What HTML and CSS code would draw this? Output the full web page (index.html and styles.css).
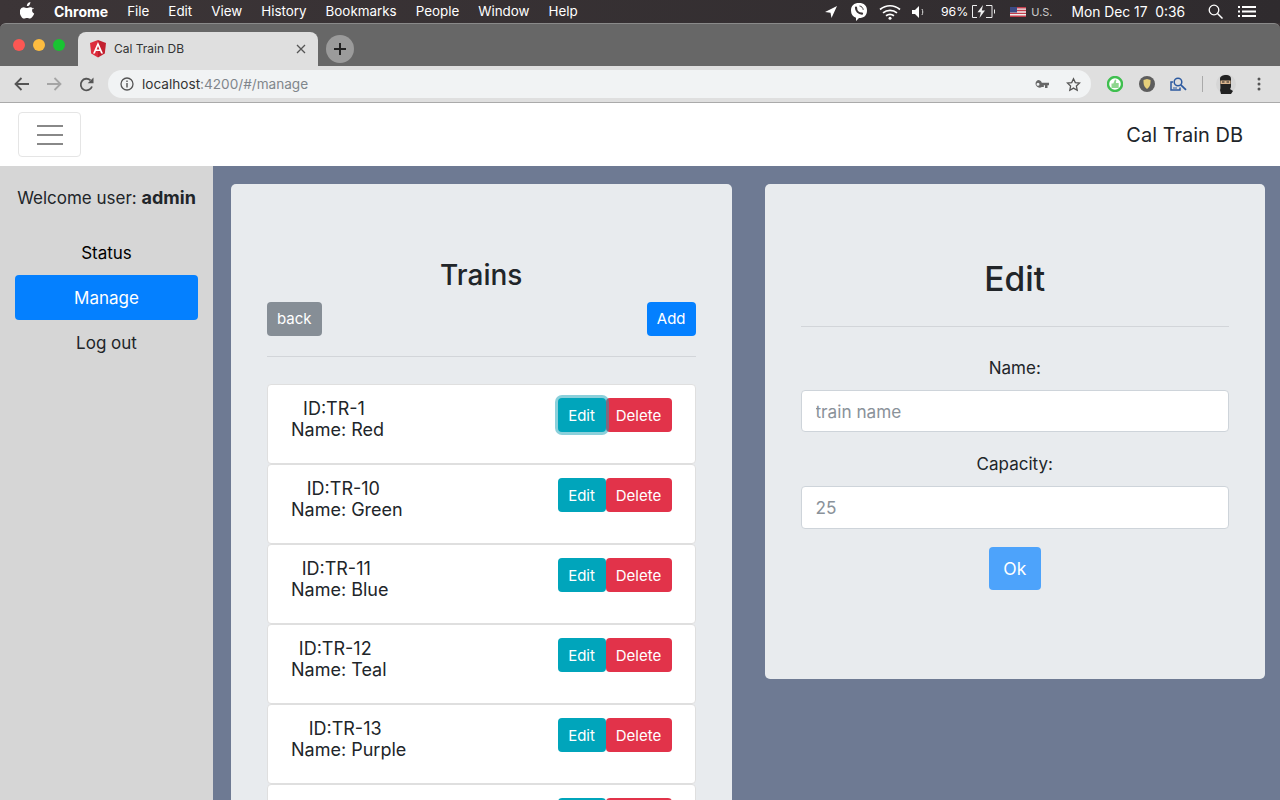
FILE: index.html
```html
<!DOCTYPE html>
<html lang="en">
  <head>
    <meta charset="UTF-8" />
    <title>Cal Train DB</title>
    <link rel="stylesheet" href="styles.css">
  </head>

  <body>
    <div id="menubar">
      <svg class="apple" width="15" height="17" viewBox="0 0 15 17"><path fill="#fff" d="M10.4 0c.1 1.1-.3 2.1-.9 2.9-.7.8-1.7 1.3-2.6 1.2-.1-1 .4-2.100 1-2.800C8.500.6 9.600.1 10.400 0zM13.700 5.700c-1 .6-1.600 1.600-1.600 2.800 0 1.400.8 2.500 2.100 3-.3 1-.8 1.900-1.400 2.800-.8 1.200-1.600 2.300-2.800 2.300-1.200 0-1.600-.7-3-.7s-1.800.7-3 .7c-1.200 0-2.100-1.200-2.900-2.400C-.5 11.800-.6 8.900.5 7.200c.8-1.200 2-1.900 3.200-1.900 1.300 0 2.100.8 3.100.8s1.700-.8 3.300-.8c1.200 0 2.700.4 3.600 2z"/></svg>
      <nav class="menu-items">
        <b>Chrome</b><span>File</span><span>Edit</span><span>View</span><span>History</span><span>Bookmarks</span><span>People</span><span>Window</span><span>Help</span>
      </nav>
      <div class="status-items">
        <svg class="st-loc" width="14" height="14" viewBox="0 0 14 14"><path fill="#fff" d="M13 1 1 7l5.500.7L7.500 13z"/></svg>
        <svg class="st-viber" width="18" height="20" viewBox="0 0 18 20"><path fill="#fff" d="M9 1c5 0 8 2.500 8 7.500S14 16 9 16l-3 3v-3.300C3 15 1 12.500 1 8.500 1 3.500 4 1 9 1z"/><path fill="none" stroke="#3a3335" stroke-width="2.200" stroke-linecap="round" d="M6 5.500c0 3.500 2.500 6 6 6.200"/><path fill="none" stroke="#3a3335" d="M9.500 4c2 .2 3.500 1.700 3.700 3.800"/></svg>
        <svg class="st-wifi" width="22" height="16" viewBox="0 0 22 16"><g fill="none" stroke="#fff" stroke-width="1.700"><path d="M1 5.500c6-5 14-5 20 0"/><path d="M4 8.800c4-3.300 10-3.300 14 0"/><path d="M7 11.800c2.500-1.800 5.500-1.800 8 0"/></g><circle cx="11" cy="14.300" r="1.500" fill="#fff"/></svg>
        <svg class="st-vol" width="13" height="12" viewBox="0 0 13 12"><path fill="#fff" d="M0 4h3l4-4v12L3 8H0z"/><path fill="none" stroke="#ddd" d="M10 3c1 2 1 4 0 6"/></svg>
        <span class="st-pct">96%</span>
        <svg class="st-batt" width="24" height="13" viewBox="0 0 24 13"><g fill="none" stroke="#eee"><path d="M6 .5H1.500v12H6M15 .5h6v12h-6"/></g><path fill="#eee" d="M23 4.500h1v4h-1zM12 0 6.500 7.300h3.300L8.500 13 14 5.500h-3.200z"/></svg>
        <svg class="st-flag" width="16" height="10" viewBox="0 0 16 10"><rect width="16" height="10" fill="#eee"/><path fill="#c23b4a" d="M0 0h16v1.400H0zM0 2.800h16v1.400H0zM0 5.700h16v1.400H0zM0 8.600h16V10H0z"/><rect width="7" height="5.500" fill="#3c4a84"/></svg>
        <span class="st-us">U.S.</span>
        <span class="st-clock">Mon Dec 17&nbsp; 0:36</span>
        <svg class="st-search" width="15" height="15" viewBox="0 0 15 15"><circle cx="6" cy="6" r="4.800" fill="none" stroke="#fff" stroke-width="1.300"/><path stroke="#fff" stroke-width="1.500" d="m9.500 9.500 5 5"/></svg>
        <svg class="st-list" width="18" height="11" viewBox="0 0 18 11"><path fill="#fff" d="M0 0h2v2H0zM4 0h14v2H4zM0 4.500h2v2H0zM4 4.500h14v2H4zM0 9h2v2H0zM4 9h14v2H4z"/></svg>
      </div>
    </div>

    <div id="window">
      <div class="tabstrip">
        <div class="lights"><i class="red"></i><i class="amber"></i><i class="green"></i></div>
        <div class="tab">
          <svg width="16" height="18" viewBox="0 0 16 18"><path fill="#dd2c3c" d="M8 0 0 2.900l1.200 10.600L8 17.500z"/><path fill="#c3202f" d="m8 0 8 2.900-1.200 10.600L8 17.500z"/><path fill="#fff" d="M8 2 3 13.500h1.900l1-2.500h4.200l1 2.500H13zm-1.400 7.500L8 6.100l1.400 3.400z"/></svg>
          <span class="tab-title">Cal Train DB</span>
          <svg class="tab-close" width="10" height="10" viewBox="0 0 10 10"><path stroke="#555" stroke-width="1.300" d="m1 1 8 8M9 1 1 9"/></svg>
        </div>
        <div class="newtab"><svg width="14" height="14" viewBox="0 0 14 14"><path stroke="#222" stroke-width="2" d="M7 1v12M1 7h12"/></svg></div>
      </div>

      <div class="toolbar">
        <svg class="tb-back" width="16" height="14" viewBox="0 0 16 14"><path fill="none" stroke="#555" stroke-width="1.800" d="M15 7H2M7.500 1 1.500 7l6 6"/></svg>
        <svg class="tb-fwd" width="16" height="14" viewBox="0 0 16 14"><path fill="none" stroke="#a5a5a5" stroke-width="1.800" d="M1 7h13M8.500 1l6 6-6 6"/></svg>
        <svg class="tb-reload" width="15" height="15" viewBox="0 0 15 15"><path fill="none" stroke="#555" stroke-width="1.800" d="M13 9.500A5.800 5.800 0 1 1 11.500 3.300"/><path fill="#555" d="M14.500.5v5.800H8.700z"/></svg>
        <div class="omnibox">
          <svg width="14" height="14" viewBox="0 0 14 14"><circle cx="7" cy="7" r="6" fill="none" stroke="#555" stroke-width="1.300"/><path fill="#555" d="M6.300 6h1.400v4.400H6.300zM6.300 3.600h1.400V5H6.300z"/></svg>
          <span class="url">localhost<em>:4200/#/manage</em></span>
          <svg class="key" width="15" height="9" viewBox="0 0 15 9"><path fill="#666" d="M4 0a4 4 0 0 1 3.800 2.800H15v2.400h-1.500V8H11V5.200H9.800V7H7.800A4 4 0 1 1 4 0zm0 2.700a1.500 1.500 0 1 0 0 3 1.500 1.500 0 0 0 0-3z"/></svg>
          <svg class="star" width="15" height="15" viewBox="0 0 15 15"><path fill="none" stroke="#555" stroke-width="1.300" d="m7.500 1.700 1.800 3.900 4.200.5-3.100 2.900.8 4.200-3.700-2.100-3.700 2.100.8-4.200L1.500 6.100l4.200-.5z"/></svg>
        </div>
        <svg class="ext-a" width="16" height="16" viewBox="0 0 16 16"><circle cx="8" cy="8" r="7" fill="#fff" stroke="#3fbf4f" stroke-width="2.400"/><path fill="#8fd68f" d="M4.500 7.500h1.800L8 3.500l1.300.6-.4 3h2.800v4.800H4.500z"/></svg>
        <svg class="ext-b" width="16" height="16" viewBox="0 0 16 16"><circle cx="8" cy="8" r="8" fill="#5d5d5d"/><path fill="#e6cf7a" d="M4.500 4 8 3l3.500 1c0 4 0 6-3.500 9C4.500 10 4.500 8 4.500 4z"/></svg>
        <svg class="ext-c" width="17" height="15" viewBox="0 0 17 15"><path fill="none" stroke="#2c5aa0" stroke-width="1.500" d="M3 5H1v8h9v-2.500"/><circle cx="8" cy="5" r="3.800" fill="none" stroke="#2c5aa0" stroke-width="1.500"/><path stroke="#2c5aa0" stroke-width="1.800" d="m10.800 7.800 5.200 5"/><path stroke="#2c5aa0" d="M3 11h4"/></svg>
        <i class="tb-div"></i>
        <svg class="avatar" width="20" height="20" viewBox="0 0 20 20"><circle cx="10" cy="10" r="10" fill="#d6d6d6"/><path fill="#222" d="M4 5c0-3 3-4 6-4s5 1 5 4v7c0 2-1 3-1 3l3 2-2 3H5l-1-4c1-1 0-8 0-11z"/><rect x="4.500" y="6.500" width="10" height="3.500" fill="#d9b38c"/><path fill="#222" d="M6 7.500h2.500v1H6zM10.500 7.500H13v1h-2.500z"/></svg>
        <svg class="tb-menu" width="4" height="14" viewBox="0 0 4 14"><g fill="#555"><circle cx="2" cy="2" r="1.500"/><circle cx="2" cy="7" r="1.500"/><circle cx="2" cy="12" r="1.500"/></g></svg>
      </div>

      <header class="navbar">
        <button class="toggler"><i></i><i></i><i></i></button>
        <span class="brand">Cal Train DB</span>
      </header>

      <div class="page">
        <aside class="sidebar">
          <p class="welcome">Welcome user: <b>admin</b></p>
          <ul class="side-nav">
            <li class="black">Status</li>
            <li class="active">Manage</li>
            <li>Log out</li>
          </ul>
        </aside>

        <main class="content">
          <section class="card trains">
            <h2>Trains</h2>
            <div class="trains-actions">
              <button class="btn btn-grey">back</button>
              <button class="btn btn-blue">Add</button>
            </div>
            <hr />
            <div class="train-list">
              <div class="train">
                <div class="train-text"><span class="train-id">ID:TR-1</span>Name: Red</div>
                <div class="train-btns"><button class="btn btn-teal focused">Edit</button><button class="btn btn-red">Delete</button></div>
              </div>
              <div class="train">
                <div class="train-text"><span class="train-id">ID:TR-10</span>Name: Green</div>
                <div class="train-btns"><button class="btn btn-teal">Edit</button><button class="btn btn-red">Delete</button></div>
              </div>
              <div class="train">
                <div class="train-text"><span class="train-id">ID:TR-11</span>Name: Blue</div>
                <div class="train-btns"><button class="btn btn-teal">Edit</button><button class="btn btn-red">Delete</button></div>
              </div>
              <div class="train">
                <div class="train-text"><span class="train-id">ID:TR-12</span>Name: Teal</div>
                <div class="train-btns"><button class="btn btn-teal">Edit</button><button class="btn btn-red">Delete</button></div>
              </div>
              <div class="train">
                <div class="train-text"><span class="train-id">ID:TR-13</span>Name: Purple</div>
                <div class="train-btns"><button class="btn btn-teal">Edit</button><button class="btn btn-red">Delete</button></div>
              </div>
              <div class="train train-last">
                <div class="train-btns"><button class="btn btn-teal"></button><button class="btn btn-red"></button></div>
              </div>
            </div>
          </section>

          <section class="card edit">
            <h1>Edit</h1>
            <hr />
            <label for="train-name">Name:</label>
            <input id="train-name" type="text" placeholder="train name" />
            <label for="train-cap">Capacity:</label>
            <input id="train-cap" class="cap" type="text" placeholder="25" />
            <button class="btn-ok">Ok</button>
          </section>
        </main>
      </div>
    </div>
  </body>
</html>
```

FILE: styles.css
```css
* {
  box-sizing: border-box;
}

html,
body {
  height: 800px;
  overflow: hidden;
}

body {
  margin: 0;
  background-color: #3a3335;
  font-family: "Inter", sans-serif;
  color: #212529;
}

/* mac menu bar */
#menubar {
  height: 23px;
  display: flex;
  align-items: center;
  padding-left: 20px;
  background: linear-gradient(90deg, #3c3537, #2f2b2e);
  color: #fff;
  font-size: 13.4px;
}

.apple {
  margin-top: -2px;
}

.menu-items {
  display: flex;
  gap: 19px;
  margin-left: 19px;
}

.menu-items b {
  font-size: 14px;
}

.status-items {
  display: flex;
  align-items: center;
  margin-left: auto;
  padding-right: 24px;
}

.status-items svg {
  flex: none;
}

.st-viber { margin-left: 12px; }
.st-wifi { margin-left: 11px; }
.st-vol { margin-left: 11px; }
.st-pct { margin-left: 16px; font-size: 12.3px; }
.st-batt { margin-left: 3px; }
.st-flag { margin-left: 15px; }
.st-us { margin-left: 5px; font-size: 11px; color: #ccc; }
.st-clock { margin-left: 19px; font-size: 13.8px; }
.st-search { margin-left: 23px; }
.st-list { margin-left: 15px; }

/* chrome window */
#window {
  height: 777px;
  display: flex;
  flex-direction: column;
}

.tabstrip {
  height: 43px;
  display: flex;
  align-items: flex-end;
  background-color: #676767;
  border-top: 1px solid #8a8a8a;
  border-radius: 6px 6px 0 0;
}

.lights {
  display: flex;
  gap: 8px;
  align-self: flex-start;
  margin: 15px 0 0 13px;
}

.lights i {
  width: 12px;
  height: 12px;
  border-radius: 50%;
}

.red { background-color: #fc5753; }
.amber { background-color: #fdbc40; }
.green { background-color: #19c332; }

.tab {
  width: 240px;
  height: 34px;
  margin-left: 13px;
  display: flex;
  align-items: center;
  padding: 0 12px 1px;
  background-color: #dfdfdf;
  border-radius: 8px 8px 0 0;
}

.tab-title {
  margin-left: 8px;
  font-size: 12px;
  color: #333;
}

.tab-close {
  margin-left: auto;
}

.newtab {
  width: 28px;
  height: 28px;
  margin: 0 0 3px 8px;
  display: flex;
  align-items: center;
  justify-content: center;
  border-radius: 50%;
  background-color: #9b9b9b;
}

.toolbar {
  height: 37px;
  display: flex;
  align-items: center;
  padding-left: 14px;
  background-color: #dfdfdf;
  border-bottom: 1px solid #aaa;
}

.tb-fwd { margin-left: 16px; }
.tb-reload { margin-left: 17px; }

.omnibox {
  width: 983px;
  height: 28px;
  margin-left: 14px;
  display: flex;
  align-items: center;
  padding-left: 12px;
  background-color: #f1f3f4;
  border-radius: 14px;
}

.url {
  margin-left: 8px;
  font-size: 13.6px;
  color: #333;
}

.url em {
  font-style: normal;
  color: #80868b;
}

.key { margin-left: auto; margin-right: 1px; }
.star { margin: 0 10px 0 16px; }

.ext-a { margin-left: 16px; }
.ext-b { margin-left: 16px; }
.ext-c { margin-left: 15px; }

.tb-div {
  width: 1px;
  height: 16px;
  margin-left: 15px;
  background-color: #aaa;
}

.avatar { margin-left: 13px; }
.tb-menu { margin-left: 21px; }

/* app */
.navbar {
  height: 63px;
  flex: none;
  display: flex;
  align-items: center;
  justify-content: space-between;
  padding: 0 37px 0 18px;
  background-color: white;
}

.toggler {
  width: 63px;
  height: 45px;
  display: flex;
  flex-direction: column;
  align-items: center;
  justify-content: center;
  gap: 7px;
  padding: 0;
  background: white;
  border: 1px solid #e5e5e5;
  border-radius: 4px;
}

.toggler i {
  width: 26px;
  height: 2px;
  background-color: #888;
}

.brand {
  font-size: 20px;
}

.page {
  flex: 1;
  display: flex;
  min-height: 0;
}

.sidebar {
  width: 213px;
  flex: none;
  padding-top: 20px;
  background-color: #d6d6d6;
  text-align: center;
  font-size: 17px;
}

.welcome {
  margin: 0 0 20px;
  line-height: 24px;
  white-space: nowrap;
}

.welcome b {
  font-size: 18px;
}

.side-nav {
  list-style: none;
  margin: 0;
  padding: 0 15px;
}

.side-nav li {
  height: 45px;
  line-height: 47px;
  border-radius: 4px;
}

.side-nav .black {
  color: black;
}

.side-nav .active {
  background-color: #0480ff;
  color: white;
}

.content {
  flex: 1;
  display: flex;
  align-items: flex-start;
  gap: 33px;
  height: 634px;
  padding: 18px 15px 0 18px;
  background-color: #6e7a93;
  overflow: hidden;
}

.card {
  flex: 1;
  padding: 0 36px;
  background-color: #e8ebee;
  border-radius: 5px;
}

.card hr {
  margin: 0;
  border: 0;
  border-top: 1px solid #d2d5d9;
}

.trains {
  height: 616px;
  padding-top: 73px;
  overflow: hidden;
  border-radius: 5px 5px 0 0;
}

.trains h2 {
  margin: 0 0 9px;
  font-size: 28px;
  font-weight: 500;
  line-height: 36px;
  text-align: center;
}

.trains-actions {
  display: flex;
  justify-content: space-between;
  margin-bottom: 20px;
}

.btn {
  height: 34px;
  padding: 0 10px 1px;
  font-family: inherit;
  font-size: 15px;
  color: white;
  border: none;
  border-radius: 4px;
}

.btn-grey { background-color: #868e96; }
.btn-blue { background-color: #0480ff; }
.btn-teal { background-color: #00a5bb; width: 48px; padding: 0; }
.btn-red { background-color: #e2334a; width: 66px; padding: 0; }

.focused {
  position: relative;
  z-index: 1;
  box-shadow: 0 0 0 3px rgba(23, 162, 184, 0.5);
}

.train-list {
  margin-top: 27px;
}

.train {
  height: 80px;
  display: flex;
  justify-content: space-between;
  padding: 13px 23px 0 23px;
  background-color: white;
  border: 1px solid #dfdfdf;
  border-radius: 4px;
}

.train-last {
  justify-content: flex-end;
}

.train-text {
  font-size: 18px;
  line-height: 21px;
  text-align: center;
}

.train-id {
  display: block;
  padding-right: 7px;
}

.train-btns {
  display: flex;
}

.edit {
  height: 495px;
  padding-top: 74px;
  display: flex;
  flex-direction: column;
  align-items: stretch;
  text-align: center;
}

.edit h1 {
  margin: 0 0 26px;
  font-size: 33.500px;
  font-weight: 500;
  line-height: 42px;
}

.edit label {
  margin: 28px 0 11px;
  padding-top: 1px;
  height: 24px;
  font-size: 17px;
  line-height: 24px;
}

.edit input + label {
  margin-top: 19px;
}

.edit input {
  height: 42px;
  padding: 0 14px;
  font-family: inherit;
  font-size: 17.2px;
  background-color: white;
  border: 1px solid #ced4da;
  border-radius: 4px;
}

.edit .cap {
  height: 43px;
}

.edit input::placeholder {
  color: #8a929a;
}

.btn-ok {
  width: 52px;
  height: 43px;
  margin: 18px auto 0;
  font-family: inherit;
  font-size: 17.5px;
  color: white;
  background-color: #4da3fb;
  border: none;
  border-radius: 4px;
}
```
